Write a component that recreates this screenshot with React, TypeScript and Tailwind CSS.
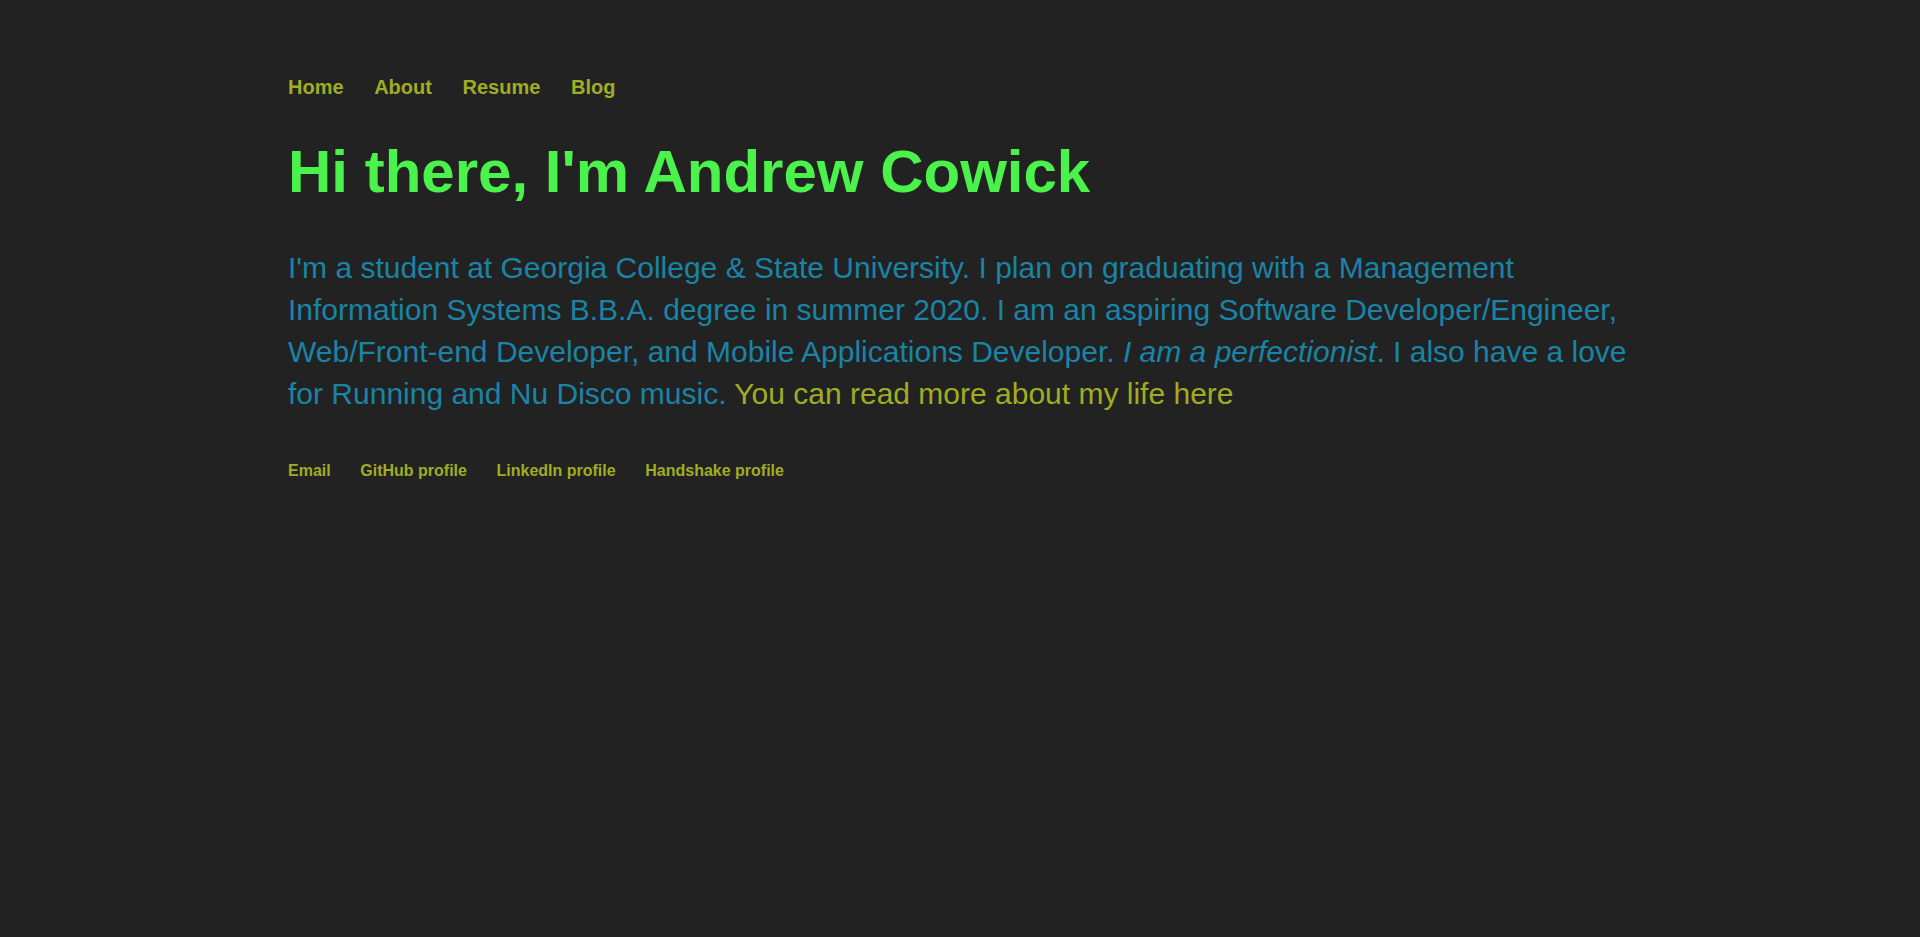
import React from "react";

export default function App() {
  const font = { fontFamily: '"Liberation Sans", Arial, sans-serif' };
  return (
    <div className="min-h-[937px] w-full bg-[#222222]" style={font}>
      <div className="mx-auto w-[70%] pt-[75px]">
        <nav className="flex gap-[30.6px] text-[20px] leading-[24px] font-bold text-[#a0ad22]">
          <a href="#">Home</a>
          <a href="#">About</a>
          <a href="#">Resume</a>
          <a href="#">Blog</a>
        </nav>
        <h1 className="mt-[37px] text-[60px] leading-[72px] font-bold text-[#4cf24c]">
          Hi there, I'm Andrew Cowick
        </h1>
        <p className="mt-[39px] text-[30px] leading-[42px] text-[#1a84a6]">
          I'm a student at Georgia College &amp; State University. I plan on graduating with a Management
          Information Systems B.B.A. degree in summer 2020. I am an aspiring Software Developer/Engineer,
          Web/Front-end Developer, and Mobile Applications Developer. <em>I am a perfectionist</em>. I also have a love
          for Running and Nu Disco music.{" "}
          <a href="#" className="text-[#a0ad22]">You can read more about my life here</a>
        </p>
        <div className="mt-[46px] flex gap-[29.6px] text-[16px] leading-[20px] font-bold text-[#a0ad22]">
          <a href="#">Email</a>
          <a href="#">GitHub profile</a>
          <a href="#">LinkedIn profile</a>
          <a href="#">Handshake profile</a>
        </div>
      </div>
    </div>
  );
}
